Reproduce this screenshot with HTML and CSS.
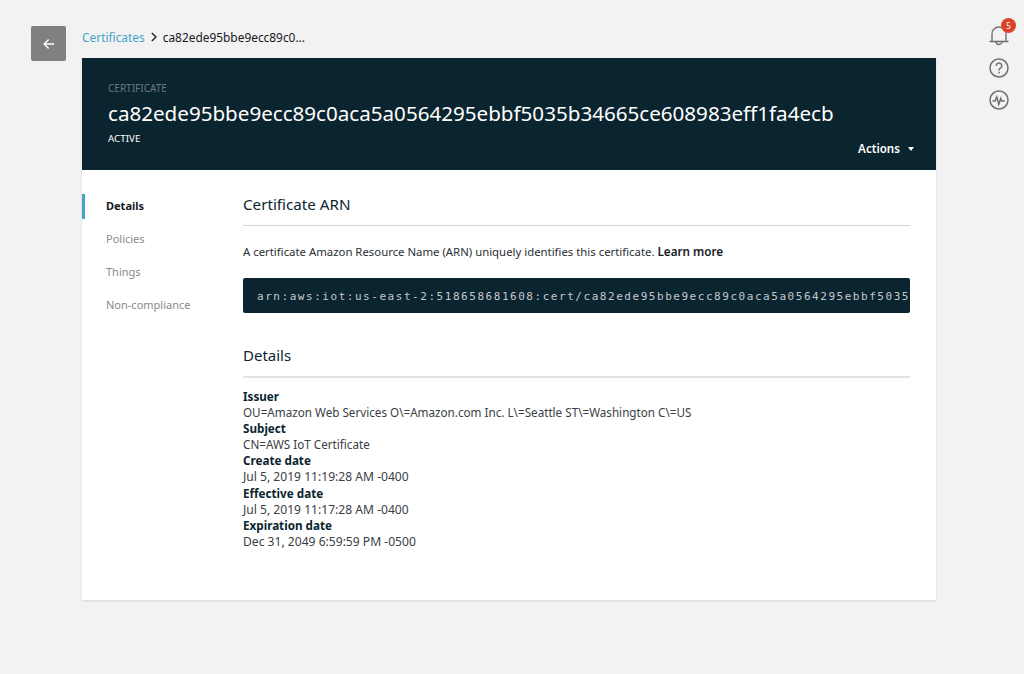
FILE: index.html
```html
<!DOCTYPE html>
<html lang="en">
<head>
<meta charset="utf-8">
<title>Certificate</title>
<link rel="stylesheet" href="styles.css">
</head>
<body>
<div class="page">
  <button class="back" aria-label="Back">
    <svg width="14" height="14" viewBox="0 0 14 14" fill="none" stroke="#fff" stroke-width="1.4"><path d="M12 7H2.2M6.6 2.6 2.2 7l4.4 4.4"/></svg>
  </button>
  <main class="main">
    <nav class="crumbs">
      <a class="crumb-link">Certificates</a>
      <svg class="crumb-sep" width="8" height="10" viewBox="0 0 8 10" fill="none" stroke="#16191f" stroke-width="1.3"><path d="M1.8 1 6 5 1.8 9"/></svg>
      <span class="crumb-current">ca82ede95bbe9ecc89c0...</span>
    </nav>
    <section class="card">
      <header class="hero">
        <div class="eyebrow">CERTIFICATE</div>
        <h1 class="hero-title">ca82ede95bbe9ecc89c0aca5a0564295ebbf5035b34665ce608983eff1fa4ecb</h1>
        <div class="status">ACTIVE</div>
        <div class="actions">Actions <span class="caret"></span></div>
      </header>
      <div class="body">
        <aside class="side">
          <a class="side-item side-active">Details</a>
          <a class="side-item">Policies</a>
          <a class="side-item">Things</a>
          <a class="side-item">Non-compliance</a>
        </aside>
        <div class="content">
          <h2 class="section-title">Certificate ARN</h2>
          <p class="intro">A certificate Amazon Resource Name (ARN) uniquely identifies this certificate. <strong class="learn">Learn more</strong></p>
          <div class="arn"><span class="arn-text">arn:aws:iot:us-east-2:518658681608:cert/ca82ede95bbe9ecc89c0aca5a0564295ebbf5035b34665ce608983eff1fa4ecb</span></div>
          <h2 class="section-title section-second">Details</h2>
          <dl class="props">
            <dt>Issuer</dt><dd>OU=Amazon Web Services O\=Amazon.com Inc. L\=Seattle ST\=Washington C\=US</dd>
            <dt>Subject</dt><dd>CN=AWS IoT Certificate</dd>
            <dt>Create date</dt><dd class="date">Jul 5, 2019 11:19:28 AM -0400</dd>
            <dt>Effective date</dt><dd class="date">Jul 5, 2019 11:17:28 AM -0400</dd>
            <dt>Expiration date</dt><dd class="date">Dec 31, 2049 6:59:59 PM -0500</dd>
          </dl>
        </div>
      </div>
    </section>
  </main>
  <aside class="rail">
    <div class="rail-icon">
      <svg width="22" height="22" viewBox="0 0 22 22" fill="none" stroke="#6f6f6f" stroke-width="1.4"><path d="M1.5 16.5h19M4 16.5V9a7 7 0 0 1 14 0v7.5M8 16.5a3 3 0 0 0 6 0"/></svg>
      <span class="badge">5</span>
    </div>
    <div class="rail-icon">
      <svg width="20" height="20" viewBox="0 0 20 20" fill="none" stroke="#6f6f6f" stroke-width="1.5"><circle cx="10" cy="10" r="9"/><path d="M7.2 7.8a2.8 2.8 0 1 1 4.3 2.4c-1 .6-1.5 1.1-1.5 2.2"/><path d="M10 13.7v1.8"/></svg>
    </div>
    <div class="rail-icon">
      <svg width="20" height="20" viewBox="0 0 20 20" fill="none" stroke="#6f6f6f" stroke-width="1.5"><circle cx="10" cy="10" r="9"/><path d="M3.5 11H6l1.8-4 2 7.5 2-6 1 2.5h3"/></svg>
    </div>
  </aside>
</div>
</body>
</html>
```
FILE: styles.css
```css
* { box-sizing: border-box; }
html, body { margin: 0; height: 100%; }
body {
  background: #f2f2f2;
  color: #16191f;
  font-family: "Noto Sans", "Open Sans", "Liberation Sans", sans-serif;
  font-size: 12px;
  overflow: hidden;
}
.page {
  display: grid;
  grid-template-columns: 35px 854px 58px;
  column-gap: 16px;
  padding: 26px 0 0 31px;
  align-items: start;
}
.back {
  width: 35px;
  height: 35px;
  background: #808080;
  border: 0;
  border-radius: 2px;
  padding: 0;
  display: flex;
  align-items: center;
  justify-content: center;
}
.main { display: flex; flex-direction: column; }
.crumbs {
  display: flex;
  align-items: center;
  height: 22px;
  margin-bottom: 10px;
  line-height: 20px;
  font-size: 11.9px;
}
.crumb-link { color: #44a3c9; }
.crumb-sep { margin: 0 5px; }
.crumb-current { color: #16191f; }
.card {
  background: #fff;
  box-shadow: 0 1px 2px rgba(0,0,0,.12);
  height: 542px;
}
.hero {
  position: relative;
  height: 112px;
  background: #0b2530;
  padding: 24px 26px 0;
  color: #fff;
}
.eyebrow { font-size: 10px; line-height: 12px; color: #6b777c; }
.hero-title {
  margin: 5px 0 0;
  font-size: 20.6px;
  line-height: 28px;
  font-weight: 400;
  white-space: nowrap;
}
.status { margin-top: 5px; font-size: 9.8px; line-height: 13px; }
.actions {
  position: absolute;
  right: 22px;
  bottom: 13px;
  font-size: 11.6px;
  font-weight: 600;
  line-height: 16px;
}
.caret {
  display: inline-block;
  width: 0;
  height: 0;
  margin-left: 5px;
  vertical-align: 2px;
  border-left: 3.5px solid transparent;
  border-right: 3.5px solid transparent;
  border-top: 4px solid #fff;
}
.body { display: flex; padding: 24px 26px 0 0; }
.side { width: 161px; flex: none; display: flex; flex-direction: column; gap: 8px; }
.side-item {
  display: block;
  height: 25px;
  line-height: 23px;
  padding-left: 21px;
  color: #8a8a8a;
  font-size: 11px;
  border-left: 3px solid transparent;
}
.side-active { color: #16191f; font-weight: 700; border-left-color: #44a3c9; }
.content { flex: 1; min-width: 0; }
.section-title {
  margin: 0;
  height: 32px;
  line-height: 20px;
  font-size: 15.2px;
  font-weight: 400;
  color: #0b2530;
  border-bottom: 1px solid #d5d5d5;
}
.section-second { margin-top: 31px; height: 34px; line-height: 22px; font-size: 15px; border-bottom: 2px solid #e3e3e3; }
.intro { margin: 18px 0 0; font-size: 11.36px; line-height: 16px; color: #2a2f35; }
.learn { font-size: 11.7px; line-height: 0; font-weight: 600; color: #16191f; }
.arn {
  margin-top: 18px;
  height: 35px;
  background: #0b2530;
  border-radius: 2px;
  overflow: hidden;
  white-space: nowrap;
  padding-left: 14px;
  line-height: 35px;
}
.arn-text {
  font-family: "DejaVu Sans Mono", "Liberation Mono", monospace;
  font-size: 11px;
  letter-spacing: 1.54px;
  color: #c4c9cb;
}
.props { margin: 11px 0 0; font-size: 11.68px; line-height: 16.1px; }
.props dt { font-weight: 700; color: #0b2530; }
.props dd { margin: 0; color: #3a4045; }
.props .date { font-size: 12.1px; }
.rail {
  justify-self: end;
  display: flex;
  flex-direction: column;
  align-items: center;
  gap: 10px;
  width: 22px;
  margin-top: -1px;
}
.rail-icon { position: relative; flex: none; height: 22px; width: 22px; display: flex; align-items: center; justify-content: center; }
.badge {
  position: absolute;
  top: -7px;
  right: -6px;
  width: 15px;
  height: 15px;
  border-radius: 50%;
  background: #d9432a;
  color: #fff;
  font-size: 8px;
  line-height: 15px;
  text-align: center;
}
```
